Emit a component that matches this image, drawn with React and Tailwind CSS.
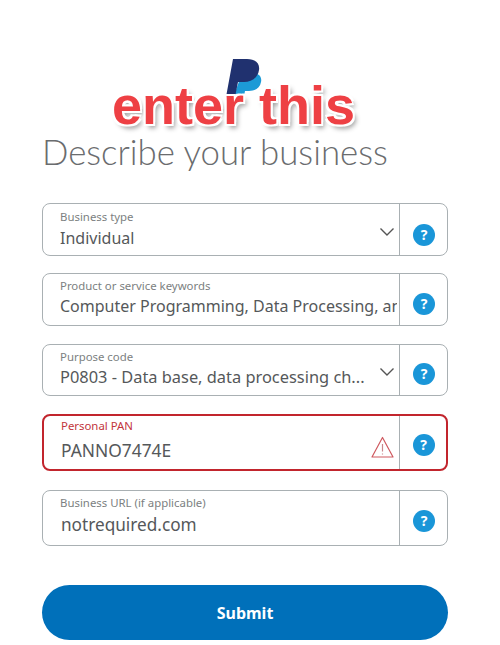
const font = { fontFamily: '"Noto Sans", sans-serif' };

function Help({ pad, width }) {
  return (
    <div className={`flex shrink-0 items-center justify-center pl-[1px] ${width} ${pad}`}>
      <div className="flex h-[22px] w-[22px] items-center justify-center rounded-full bg-[#1a96d8] text-[14px] font-bold leading-none text-white">?</div>
    </div>
  );
}

function Chevron({ lift }) {
  return (
    <svg width="16" height="10" viewBox="0 0 16 10" fill="none" stroke="#555" strokeWidth="1.4" className={`shrink-0 ${lift}`}>
      <path d="M1.5 1.5 8 8l6.5-6.5" />
    </svg>
  );
}

function Warn() {
  return (
    <svg width="23" height="23" viewBox="0 0 23 23" fill="none" stroke="#cf5a60" strokeWidth="1.2" strokeLinejoin="round" className="mb-[5px] shrink-0">
      <path d="M11.5 1.5 22 21H1z" />
      <path d="M11.5 8v7.5M11.5 17.5v1" stroke="#c9868a" />
    </svg>
  );
}

function Field({ label, value, h, error, right, inset, labelTop, clip, size, pr, gap, pad }) {
  return (
    <div className={`flex w-full overflow-hidden rounded-[8px] border bg-white ${h} ${error ? "border-2 border-[#c2252d]" : "border-[#a9b0b3]"}`}>
      <div className={`relative flex min-w-0 flex-1 flex-col ${labelTop}`}>
        <div className={`pl-[17px] text-[11.4px] leading-[14px] ${error ? "text-[#c2353c]" : "text-[#7c7f81]"}`}>{label}</div>
        <div className={`flex items-center ${gap} ${pr}`}>
          <div className={`min-w-0 flex-1 whitespace-nowrap ${clip ? "overflow-hidden" : ""} ${inset} ${size} leading-[24px] text-[#55585a]`}>{value}</div>
          {right}
        </div>
      </div>
      <div className="w-px bg-[#a9b0b3]" />
      <Help pad={pad} width={error ? "w-[46px]" : "w-[47px]"} />
    </div>
  );
}

export default function App() {
  return (
    <div className="h-[645px] w-[500px] overflow-hidden bg-white pl-[42px] pr-[52px] pt-[132px]" style={font}>
      <div className="relative">
        <h1 className="whitespace-nowrap text-[34.8px] font-light leading-[40px] text-[#6a6c6e]" style={{ fontFamily: 'Lato, sans-serif' }}>Describe your business</h1>
        <svg width="38" height="44" viewBox="0 0 38 44" className="absolute left-[184px] top-[-73px]">
          <path d="M16 14h10c8 0 10 5 9 9-1 6-6 9-12 9h-4l-2 10H6z" fill="#1c9ad6" />
          <path d="M7 0h14c9 0 13 5 12 11-1 8-8 12-15 12h-6l-3 15H0z" fill="#20316f" />
        </svg>
        <div
          className="absolute left-[70px] top-[-54px] whitespace-nowrap text-[54px] font-bold leading-[54px] text-[#ee4044]"
          style={{ fontFamily: '"Liberation Sans", sans-serif', textShadow: "0 0 2px #fff, 2px 2px 0 #fff, -2px -2px 0 #fff, 2px -2px 0 #fff, -2px 2px 0 #fff, 3px 4px 5px #999" }}
        >
          enter this
        </div>
      </div>
      <div className="mt-[31px] flex flex-col">
        <Field label="Business type" value="Individual" h="h-[53px]" labelTop="pt-[6px]" inset="pl-[17px]" size="text-[16px]" pr="pr-[4px]" gap="mt-[2px]" pad="pt-[10px]" right={<Chevron lift="mb-[13px]" />} />
        <div className="h-[17px]" />
        <Field label="Product or service keywords" value="Computer Programming, Data Processing, and" h="h-[53px]" labelTop="pt-[5px]" inset="pl-[17px]" size="text-[16px]" pr="pr-[2px]" gap="mt-[1px]" pad="pt-[9px]" clip />
        <div className="h-[18px]" />
        <Field label="Purpose code" value="P0803 - Data base, data processing ch..." h="h-[52px]" labelTop="pt-[5px]" inset="pl-[17px]" size="text-[16.4px]" pr="pr-[4px]" gap="mt-[1px]" pad="pt-[7px]" right={<Chevron lift="mb-[11px]" />} />
        <div className="h-[18px]" />
        <Field label="Personal PAN" value="PANNO7474E" h="h-[57px]" error labelTop="pt-[3px]" inset="pl-[17px]" size="text-[17.4px]" pr="pr-[5px]" gap="mt-[3px]" pad="pt-[4px]" right={<Warn />} />
        <div className="h-[19px]" />
        <Field label="Business URL (if applicable)" value="notrequired.com" h="h-[56px]" labelTop="pt-[5px]" inset="pl-[18px]" size="text-[17.2px]" gap="mt-[3px]" pad="pt-[5px]" />
      </div>
      <button className="mt-[39px] h-[55px] w-full rounded-full bg-[#0070ba] text-[16px] font-bold text-white">Submit</button>
    </div>
  );
}
